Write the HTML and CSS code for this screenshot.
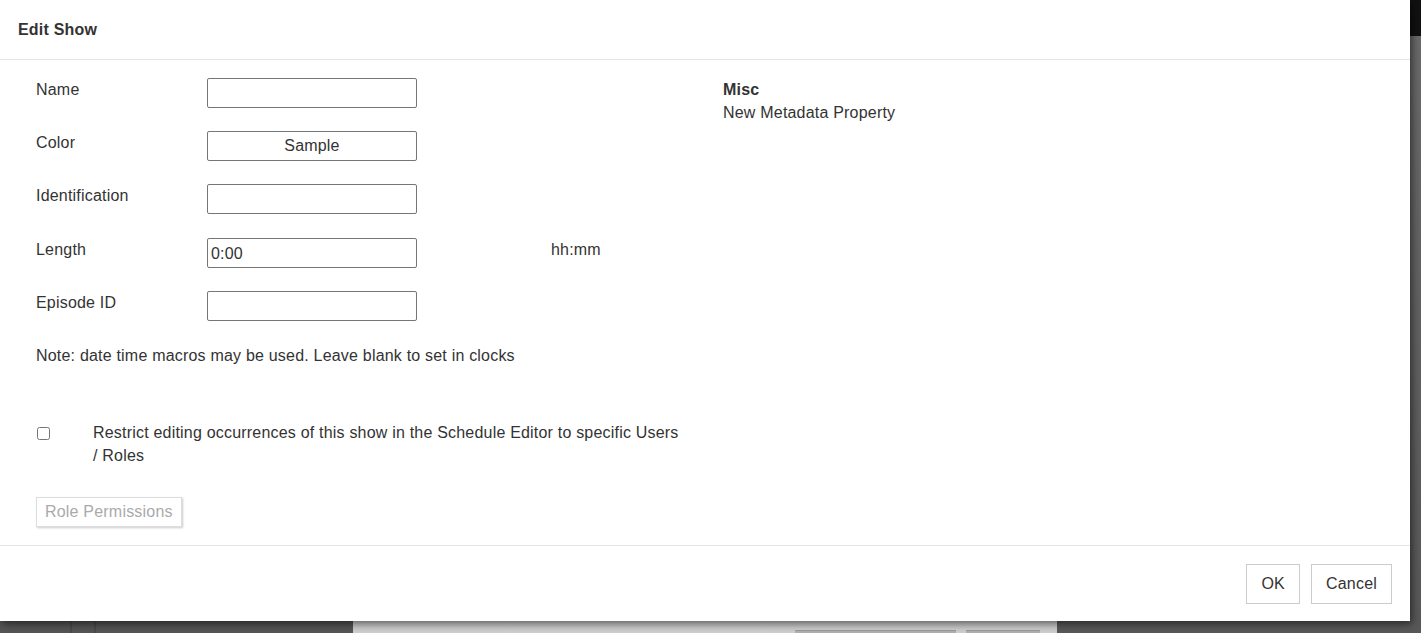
FILE: index.html
```html
<!DOCTYPE html>
<html lang="en">
<head>
  <meta charset="UTF-8" />
  <title>Edit Show</title>
  <link rel="stylesheet" href="styles.css">
</head>
<body>
  <!-- app behind the modal (dimmed) -->
  <div class="backdrop">
    <div class="bg-top"></div>
    <div class="bg-row">
      <div class="bg-side"><span></span><span></span></div>
      <div class="bg-panel">
        <div class="bg-btn wide"></div>
        <div class="bg-btn"></div>
      </div>
      <div class="bg-rest"></div>
    </div>
  </div>

  <!-- Modal -->
  <div class="modal">
    <div class="modal-header">
      <h4>Edit Show</h4>
    </div>

    <div class="modal-body">
      <div class="col-left">
        <div class="form-row">
          <label>Name</label>
          <input type="text" class="field" />
        </div>
        <div class="form-row">
          <label>Color</label>
          <div class="field sample">Sample</div>
        </div>
        <div class="form-row">
          <label>Identification</label>
          <input type="text" class="field" />
        </div>
        <div class="form-row length">
          <label>Length</label>
          <input type="text" class="field" value="0:00" />
          <span class="hint">hh:mm</span>
        </div>
        <div class="form-row">
          <label>Episode ID</label>
          <input type="text" class="field" />
        </div>

        <p class="note">Note: date time macros may be used. Leave blank to set in clocks</p>

        <div class="check-row">
          <input type="checkbox" />
          <span>Restrict editing occurrences of this show in the Schedule Editor to specific Users / Roles</span>
        </div>

        <button class="btn-roles" disabled>Role Permissions</button>
      </div>

      <div class="col-right">
        <div class="misc-title">Misc</div>
        <div>New Metadata Property</div>
      </div>
    </div>

    <div class="modal-footer">
      <button class="btn">OK</button>
      <button class="btn">Cancel</button>
    </div>
  </div>
</body>
</html>
```

FILE: styles.css
```css
body {
  margin: 0;
  font-family: "Liberation Sans", Arial, sans-serif;
  font-size: 16px;
  letter-spacing: 0.2px;
  color: #333;
  overflow: hidden;
  width: 1421px;
  height: 633px;
  position: relative;
  background: #5c5c5c;
}

/* Backdrop */
.backdrop {
  display: flex;
  flex-direction: column;
  height: 633px;
}

.bg-top {
  height: 36px;
  background: #111;
}

.bg-row {
  flex: 1;
  display: flex;
}

.bg-side {
  width: 353px;
  background: linear-gradient(#666, #555);
  display: flex;
}

.bg-side span {
  width: 2px;
  height: 100%;
  background: #4a4a4a;
  margin-left: 70px;
}

.bg-side span + span {
  margin-left: 22px;
}

.bg-panel {
  width: 704px;
  background: linear-gradient(#999, #cfcfcf);
  display: flex;
  align-items: flex-end;
  gap: 10px;
  padding-left: 442px;
  box-sizing: border-box;
}

.bg-btn {
  width: 74px;
  height: 2px;
  background: #b0b0b0;
  border-top: 1px solid #9a9a9a;
}

.bg-btn.wide {
  width: 161px;
}

.bg-rest {
  flex: 1;
  background: linear-gradient(#6a6a6a, #585858);
}

/* Modal */
.modal {
  position: absolute;
  top: 0;
  left: 0;
  width: 1410px;
  height: 621px;
  background: #fff;
  box-shadow: 2px 3px 8px rgba(0,0,0,0.55);
  display: flex;
  flex-direction: column;
}

.modal-header {
  height: 59px;
  border-bottom: 1px solid #e5e5e5;
  padding: 0 18px;
  display: flex;
  align-items: center;
}

.modal-header h4 {
  margin: 0;
  font-size: 16px;
  font-weight: bold;
  color: #333;
}

.modal-body {
  flex: 1;
  display: flex;
  padding: 18px 0 0 36px;
}

.col-left {
  width: 650px;
  padding-right: 37px;
}

.col-right {
  line-height: 23px;
}

.misc-title {
  font-weight: bold;
}

.form-row {
  display: flex;
  align-items: flex-start;
  height: 53px;
}

.form-row.length {
  height: 53px;
  margin-top: 1px;
}

.form-row label {
  width: 171px;
  padding-top: 3px;
}

.field {
  box-sizing: border-box;
  width: 210px;
  height: 30px;
  border: 1px solid #767676;
  border-radius: 2px;
  font-family: inherit;
  font-size: 16px;
  letter-spacing: 0.2px;
  color: #333;
  padding: 2px 3px 0;
  margin: 0;
}

.sample {
  display: flex;
  align-items: center;
  justify-content: center;
  padding: 0;
}

.hint {
  margin-left: 134px;
  padding-top: 3px;
}

.note {
  margin: 0;
  line-height: 23px;
}

.check-row {
  display: flex;
  align-items: flex-start;
  margin-top: 54px;
  line-height: 23px;
}

.check-row input {
  width: 13px;
  height: 13px;
  margin: 6px 43px 0 1px;
  flex-shrink: 0;
}

.btn-roles {
  margin-top: 30px;
  font-family: inherit;
  font-size: 16px;
  letter-spacing: 0.2px;
  color: #aaa;
  background: #fff;
  border: 1px solid #ddd;
  box-shadow: 1px 1px 2px #ccc;
  padding: 4px 8px;
  height: 30px;
}

.modal-footer {
  box-sizing: border-box;
  height: 76px;
  border-top: 1px solid #e5e5e5;
  display: flex;
  justify-content: flex-end;
  align-items: center;
  gap: 11px;
  padding: 0 18px 0 0;
}

.btn {
  font-family: inherit;
  font-size: 16px;
  letter-spacing: 0.2px;
  color: #333;
  background: #fff;
  border: 1px solid #ccc;
  height: 40px;
  padding: 0 14px;
}
```
